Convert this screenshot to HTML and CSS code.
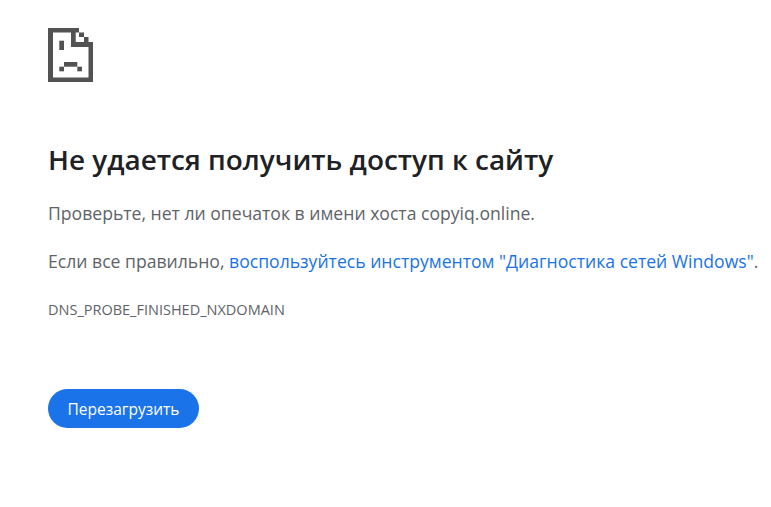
FILE: index.html
```html
<!DOCTYPE html>
<html lang="ru">
<head>
<meta charset="utf-8">
<title>copyiq.online</title>
<link rel="stylesheet" href="styles.css">
</head>
<body>
<main class="page">
  <svg class="icon" width="45" height="55" viewBox="0 0 45 55" aria-hidden="true">
    <path class="px" fill-rule="evenodd" d="M0 1H31V5.500H5V50.500H40.500V20H23V5.500H27.700V15H45V55H0Z"/>
    <rect class="px" x="31" y="5.500" width="5" height="4.500"/>
    <rect class="px" x="36" y="10" width="4.500" height="5"/>
    <rect class="px" x="11.300" y="13.700" width="4.700" height="9.300"/>
    <rect class="px" x="16" y="35" width="13.300" height="4.700"/>
    <rect class="px" x="11.300" y="39.700" width="4.700" height="4.600"/>
    <rect class="px" x="29.300" y="39.700" width="4.700" height="4.600"/>
  </svg>
  <h1 class="title">Не удается получить доступ к сайту</h1>
  <p class="text">Проверьте, нет ли опечаток в имени хоста copyiq.online.</p>
  <p class="text second">Если все правильно, <a class="link" href="#">воспользуйтесь инструментом "Диагностика сетей Windows"</a>.</p>
  <div class="code">DNS_PROBE_FINISHED_NXDOMAIN</div>
  <button class="reload" type="button">Перезагрузить</button>
</main>
</body>
</html>
```
FILE: styles.css
```css
html, body {
  margin: 0;
  padding: 0;
  background: #fff;
}
body {
  font-family: "Open Sans", "Noto Sans", sans-serif;
  color: #5f6368;
  overflow: hidden;
}
.page {
  display: flex;
  flex-direction: column;
  align-items: flex-start;
  padding: 27px 0 0 48px;
}
.icon {
  display: block;
}
.px { fill: #525252; }
.title {
  margin: 58px 0 0;
  font-size: 27.900px;
  line-height: 38px;
  font-weight: 600;
  color: #202124;
  white-space: nowrap;
}
.text {
  margin: 23px 0 0;
  font-size: 17.600px;
  line-height: 24px;
  white-space: nowrap;
}
.second { margin-top: 24px; }
.link { color: #1a73e8; text-decoration: none; }
.code {
  margin-top: 28px;
  font-size: 14.500px;
  line-height: 18px;
  white-space: nowrap;
}
.reload {
  margin-top: 70px;
  width: 151px;
  height: 39px;
  border: 0;
  border-radius: 20px;
  background: #1a73e8;
  color: #fff;
  font-family: inherit;
  font-size: 15.500px;
  padding: 0;
}
```
